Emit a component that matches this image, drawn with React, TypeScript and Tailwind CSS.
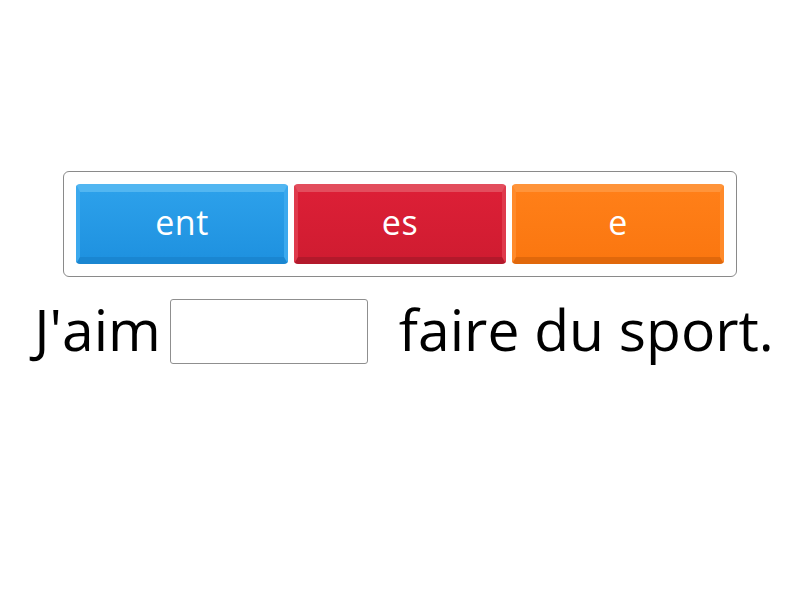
import React from "react";

interface Choice {
  label: string;
  face: string;
}

const choices: Choice[] = [
  {
    label: "ent",
    face: "bg-gradient-to-b from-[#2ca0ea] to-[#1f92e0] border-t-[#52b6f1] border-x-[#3ba9ee] border-b-[#1a86d1]",
  },
  {
    label: "es",
    face: "bg-gradient-to-b from-[#dc1f36] to-[#d01c31] border-t-[#e34d5d] border-x-[#df3a4c] border-b-[#b3192b]",
  },
  {
    label: "e",
    face: "bg-gradient-to-b from-[#ff7f18] to-[#fb7710] border-t-[#ff943a] border-x-[#ff8a2a] border-b-[#e1680b]",
  },
];

const App: React.FC = () => {
  return (
    <div
      className="w-[800px] h-[600px] bg-white flex flex-col items-center"
      style={{ fontFamily: "'Open Sans', 'Noto Sans', sans-serif" }}
    >
      {/* choice tray */}
      <div className="mt-[171px] w-[674px] h-[106px] border border-[#8a8a8a] rounded-[6px] p-[12px] flex gap-[6px]">
        {choices.map((c) => (
          <div
            key={c.label}
            className={`w-[212px] h-[80px] rounded-[4px] border-t-[8px] border-x-[4px] border-b-[7px] flex items-center justify-center text-white text-[34px] font-medium leading-none ${c.face}`}
          >
            <span className="-mt-[6px] tracking-[0.5px]">{c.label}</span>
          </div>
        ))}
      </div>

      {/* sentence */}
      <div className="mt-[22px] ml-[8px] flex items-center text-[57px] text-black leading-none">
        <span className="-mt-[4px]">J'aim</span>
        <div className="ml-[9px] w-[198px] h-[65px] border border-[#8f8f8f] rounded-[3px] bg-white" />
        <span className="ml-[31px] -mt-[4px]">faire du sport.</span>
      </div>
    </div>
  );
};

export default App;
